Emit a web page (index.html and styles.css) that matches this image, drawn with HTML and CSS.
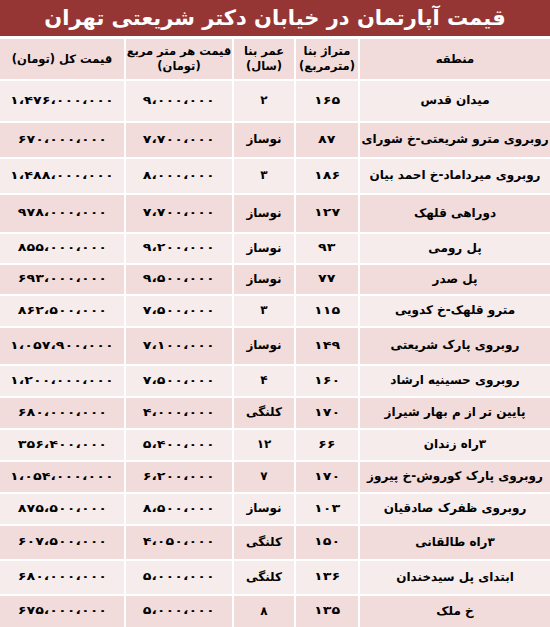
FILE: index.html
```html
<!DOCTYPE html>
<html lang="fa" dir="rtl">
<head>
<meta charset="utf-8">
<title>قیمت آپارتمان در خیابان دکتر شریعتی تهران</title>
<link rel="stylesheet" href="styles.css">
</head>
<body>
<div class="page">
  <div class="title">قیمت آپارتمان در خیابان دکتر شریعتی تهران</div>
  <div class="table">
    <div class="c h">منطقه</div>
    <div class="c h">متراژ بنا<br>(مترمربع)</div>
    <div class="c h">عمر بنا<br>(سال)</div>
    <div class="c h">قیمت هر متر مربع<br>(تومان)</div>
    <div class="c h">قیمت کل (تومان)</div>

    <div class="c l">میدان قدس</div><div class="c l"><span class="n">۱۶۵</span></div><div class="c l">۲</div><div class="c l"><span class="n">۹،۰۰۰،۰۰۰</span></div><div class="c l"><span class="n">۱،۴۷۶،۰۰۰،۰۰۰</span></div>
    <div class="c d">روبروی مترو شریعتی-خ شورای</div><div class="c d"><span class="n">۸۷</span></div><div class="c d">نوساز</div><div class="c d"><span class="n">۷،۷۰۰،۰۰۰</span></div><div class="c d"><span class="n">۶۷۰،۰۰۰،۰۰۰</span></div>
    <div class="c l">روبروی میرداماد-خ احمد بیان</div><div class="c l"><span class="n">۱۸۶</span></div><div class="c l">۳</div><div class="c l"><span class="n">۸،۰۰۰،۰۰۰</span></div><div class="c l"><span class="n">۱،۴۸۸،۰۰۰،۰۰۰</span></div>
    <div class="c d">دوراهی قلهک</div><div class="c d"><span class="n">۱۲۷</span></div><div class="c d">نوساز</div><div class="c d"><span class="n">۷،۷۰۰،۰۰۰</span></div><div class="c d"><span class="n">۹۷۸،۰۰۰،۰۰۰</span></div>
    <div class="c l">پل رومی</div><div class="c l"><span class="n">۹۳</span></div><div class="c l">نوساز</div><div class="c l"><span class="n">۹،۲۰۰،۰۰۰</span></div><div class="c l"><span class="n">۸۵۵،۰۰۰،۰۰۰</span></div>
    <div class="c d">پل صدر</div><div class="c d"><span class="n">۷۷</span></div><div class="c d">نوساز</div><div class="c d"><span class="n">۹،۵۰۰،۰۰۰</span></div><div class="c d"><span class="n">۶۹۳،۰۰۰،۰۰۰</span></div>
    <div class="c l">مترو قلهک-خ کدویی</div><div class="c l"><span class="n">۱۱۵</span></div><div class="c l">۳</div><div class="c l"><span class="n">۷،۵۰۰،۰۰۰</span></div><div class="c l"><span class="n">۸۶۲،۵۰۰،۰۰۰</span></div>
    <div class="c d">روبروی پارک شریعتی</div><div class="c d"><span class="n">۱۴۹</span></div><div class="c d">نوساز</div><div class="c d"><span class="n">۷،۱۰۰،۰۰۰</span></div><div class="c d"><span class="n">۱،۰۵۷،۹۰۰،۰۰۰</span></div>
    <div class="c l">روبروی حسینیه ارشاد</div><div class="c l"><span class="n">۱۶۰</span></div><div class="c l">۴</div><div class="c l"><span class="n">۷،۵۰۰،۰۰۰</span></div><div class="c l"><span class="n">۱،۲۰۰،۰۰۰،۰۰۰</span></div>
    <div class="c d">پایین تر از م بهار شیراز</div><div class="c d"><span class="n">۱۷۰</span></div><div class="c d">کلنگی</div><div class="c d"><span class="n">۴،۰۰۰،۰۰۰</span></div><div class="c d"><span class="n">۶۸۰،۰۰۰،۰۰۰</span></div>
    <div class="c l">۳راه زندان</div><div class="c l"><span class="n">۶۶</span></div><div class="c l">۱۲</div><div class="c l"><span class="n">۵،۴۰۰،۰۰۰</span></div><div class="c l"><span class="n">۳۵۶،۴۰۰،۰۰۰</span></div>
    <div class="c d">روبروی پارک کوروش-خ پیروز</div><div class="c d"><span class="n">۱۷۰</span></div><div class="c d">۷</div><div class="c d"><span class="n">۶،۲۰۰،۰۰۰</span></div><div class="c d"><span class="n">۱،۰۵۴،۰۰۰،۰۰۰</span></div>
    <div class="c l">روبروی ظفرک صادقیان</div><div class="c l"><span class="n">۱۰۳</span></div><div class="c l">نوساز</div><div class="c l"><span class="n">۸،۵۰۰،۰۰۰</span></div><div class="c l"><span class="n">۸۷۵،۵۰۰،۰۰۰</span></div>
    <div class="c d">۳راه طالقانی</div><div class="c d"><span class="n">۱۵۰</span></div><div class="c d">کلنگی</div><div class="c d"><span class="n">۴،۰۵۰،۰۰۰</span></div><div class="c d"><span class="n">۶۰۷،۵۰۰،۰۰۰</span></div>
    <div class="c l">ابتدای پل سیدخندان</div><div class="c l"><span class="n">۱۳۶</span></div><div class="c l">کلنگی</div><div class="c l"><span class="n">۵،۰۰۰،۰۰۰</span></div><div class="c l"><span class="n">۶۸۰،۰۰۰،۰۰۰</span></div>
    <div class="c d">خ ملک</div><div class="c d"><span class="n">۱۳۵</span></div><div class="c d">۸</div><div class="c d"><span class="n">۵،۰۰۰،۰۰۰</span></div><div class="c d"><span class="n">۶۷۵،۰۰۰،۰۰۰</span></div>
  </div>
</div>
</body>
</html>
```
FILE: styles.css
```css
html, body {
  margin: 0;
  padding: 0;
  background: #ffffff;
}
body {
  font-family: "DejaVu Sans", "Noto Sans", sans-serif;
  color: #000;
  direction: rtl;
}
.page {
  width: 550px;
  height: 627px;
  overflow: hidden;
  display: flex;
  flex-direction: column;
  gap: 3px;
}
.title {
  height: 36px;
  background: #963634;
  color: #ffffff;
  font-weight: bold;
  font-size: 21px;
  display: flex;
  align-items: center;
  justify-content: center;
}
.table {
  display: grid;
  grid-template-columns: 190px 62px 60px 106px 124px;
  grid-template-rows: 40px 40px 34px 34px 37px 29px 29px 30px 36px 30px 30px 30px 30px 30px 33px 33px 31px;
  gap: 2px;
}
.c {
  display: flex;
  align-items: center;
  justify-content: center;
  text-align: center;
  font-size: 12px;
  font-weight: bold;
  line-height: 1.3;
}
.h {
  font-size: 11.5px;
}
.h, .d {
  background: #f2dcdb;
}
.l {
  background: #f7ecec;
}
.n {
  display: inline-block;
  font-size: 11px;
  transform: scaleX(1.3);
}
```
